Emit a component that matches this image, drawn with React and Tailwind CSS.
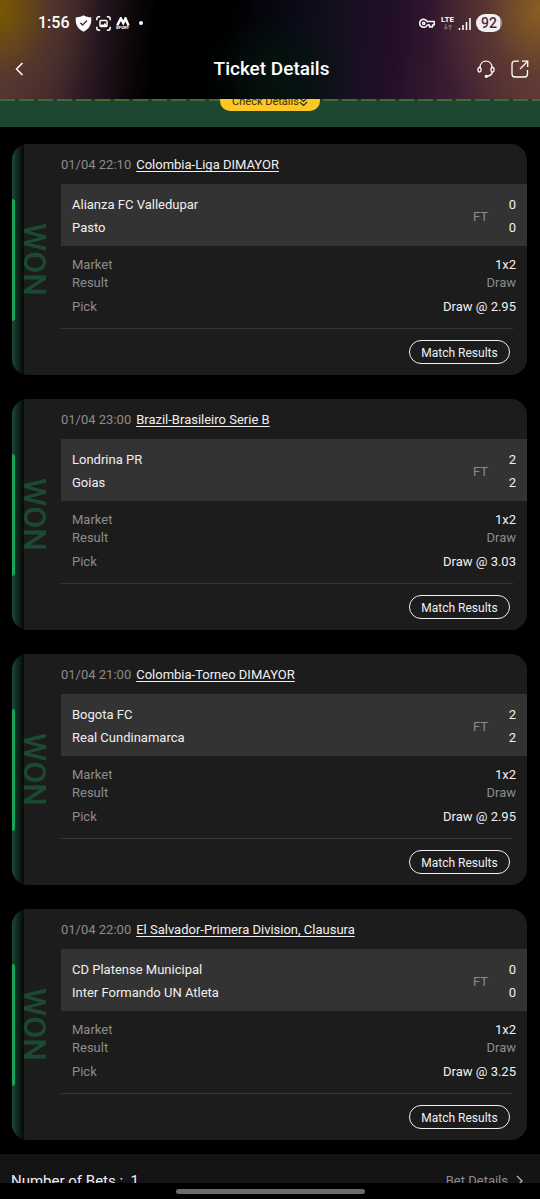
import React from 'react';

const bets = [
  { id: 1, time: '01/04 22:10', league: 'Colombia-Liga DIMAYOR', home: 'Alianza FC Valledupar', away: 'Pasto', homeScore: 0, awayScore: 0, odds: '2.95' },
  { id: 2, time: '01/04 23:00', league: 'Brazil-Brasileiro Serie B', home: 'Londrina PR', away: 'Goias', homeScore: 2, awayScore: 2, odds: '3.03' },
  { id: 3, time: '01/04 21:00', league: 'Colombia-Torneo DIMAYOR', home: 'Bogota FC', away: 'Real Cundinamarca', homeScore: 2, awayScore: 2, odds: '2.95' },
  { id: 4, time: '01/04 22:00', league: 'El Salvador-Primera Division, Clausura', home: 'CD Platense Municipal', away: 'Inter Formando UN Atleta', homeScore: 0, awayScore: 0, odds: '3.25' },
];

function StatusBar() {
  return (
    <div className="flex h-[46px] items-center justify-between pl-[38px] pr-[38px]">
      <div className="flex items-center">
        <span className="w-[37px] text-[16px] font-medium leading-5">1:56</span>
        <svg width="17" height="17" viewBox="0 0 16 16" aria-hidden="true">
          <path d="M8 .2C6 1.500 3.500 2.100 .8 2.200 .2 7 1.200 12.500 8 15.800 14.800 12.500 15.800 7 15.200 2.200 12.500 2.100 10 1.500 8 .2z" fill="#fff" />
          <path d="M5 7.200 7.200 9.400 11.200 5.200" fill="none" stroke="#4a3030" strokeWidth="1.300" />
        </svg>
        <svg className="ml-1" width="15" height="15" viewBox="0 0 15 15" fill="none" stroke="#fff" strokeWidth="1.500" aria-hidden="true">
          <path d="M.8 4.200V3A2.200 2.200 0 0 1 3 .8h1.200M10.800.8H12A2.200 2.200 0 0 1 14.200 3v1.200M14.200 10.800V12a2.200 2.200 0 0 1-2.200 2.200h-1.200M4.200 14.200H3A2.200 2.200 0 0 1 .8 12v-1.200" />
          <rect x="4" y="4.500" width="7" height="6" rx="1" />
          <path d="m4 10.500 2-2.500 1.200 1L9 6.800l2 3.700z" fill="#fff" stroke="none" />
        </svg>
        <span className="ml-1 flex w-[15px] flex-col items-center">
          <svg width="14" height="9" viewBox="0 0 14 9" aria-hidden="true">
            <path d="M1.200 8.500 4.800 1.500 7.300 6 9.500 1.500 12.500 8.500" fill="none" stroke="#fff" strokeWidth="2.500" />
          </svg>
          <span className="text-[4px] font-black leading-[4px]">SPORT</span>
        </span>
        <span className="ml-[9px] h-1 w-1 rounded-full bg-white" />
      </div>
      <div className="flex items-center">
        <svg width="16" height="11" viewBox="0 0 16 11" fill="none" stroke="#fff" strokeWidth="1.500" strokeLinejoin="round" aria-hidden="true">
          <path d="M8.300 3.600A4 4 0 1 0 8.300 7h2.200v2h3V7h1.700V3.600z" />
          <circle cx="4.700" cy="5.300" r="1.100" />
        </svg>
        <span className="ml-[6px] flex w-[13px] flex-col items-center">
          <span className="text-[8px] font-bold leading-2">LTE</span>
          <svg width="10" height="6" viewBox="0 0 10 6" fill="none" stroke="#8a7a84" aria-hidden="true">
            <path d="M2.800 0v5.200M.8 3.200l2 2 2-2M7.200 6V.8M5.200 2.800l2-2 2 2" />
          </svg>
        </span>
        <svg className="ml-1" width="13" height="13" viewBox="0 0 13 13" stroke="#fff" strokeWidth="1.500" aria-hidden="true">
          <path d="M1.500 13v-2M5 13V8M8.500 13V5M12 13V1" />
        </svg>
        <span className="ml-[5px] flex h-[18px] w-[26px] items-center justify-center rounded-full bg-[linear-gradient(90deg,#f5eff2_0_92%,#b09aa0_92%_100%)] text-[14px] font-medium text-[#4b2c3c]">92</span>
      </div>
    </div>
  );
}

function Header() {
  return (
    <header className="h-[99px] bg-black bg-[radial-gradient(ellipse_100px_130px_at_0%_10%,#7a5800_0%,#63442480_50%,transparent_100%),radial-gradient(ellipse_110px_130px_at_100%_10%,#8a5e22_0%,#6b443080_50%,transparent_100%),radial-gradient(ellipse_80px_60px_at_52%_75%,#04140c_0%,transparent_100%),linear-gradient(95deg,#50303a_0%,#3c242e_12%,#24151d_19%,#0b0609_25%,#000_29%,#000_42%,#0a0a18_54%,#14101f_62%,#220e28_72%,#3f2034_86%,#5a3436_100%)]">
      <StatusBar />
      <div className="grid h-[46px] grid-cols-[1fr_auto_1fr] items-center pl-[14px] pr-[11px]">
        <button type="button" aria-label="Back" className="w-3">
          <svg width="12" height="14" viewBox="0 0 12 14" fill="none" stroke="#fff" strokeWidth="1.500" aria-hidden="true">
            <path d="M8.500 1 2.500 7l6 6" />
          </svg>
        </button>
        <h1 className="text-[19px] font-medium leading-6">Ticket Details</h1>
        <div className="flex justify-end gap-4">
          <button type="button" aria-label="Support">
            <svg width="18" height="18" viewBox="0 0 18 18" fill="none" stroke="#fff" strokeWidth="1.300" aria-hidden="true">
              <path d="M3 7.500C3 3.500 5.700 1.200 9 1.200s6 2.300 6 6.300M15.300 12c-.5 2.500-2.500 4-5 4.200" />
              <rect x="1" y="7.500" width="3" height="4.500" rx="1.500" />
              <rect x="14" y="7.500" width="3" height="4.500" rx="1.500" />
              <circle cx="9.300" cy="16.300" r="1" fill="#fff" />
            </svg>
          </button>
          <button type="button" aria-label="Share">
            <svg width="18" height="18" viewBox="0 0 18 18" fill="none" stroke="#fff" strokeWidth="1.300" aria-hidden="true">
              <path d="M8 1.200H4A3 3 0 0 0 1 4.200V14a3 3 0 0 0 3 3h9.500a3 3 0 0 0 3-3v-4M11 1.200h5.700V7M16.500 1.500 9 9" />
            </svg>
          </button>
        </div>
      </div>
    </header>
  );
}

// Tail of the ticket summary, scrolled under the header
function SummaryEdge() {
  return (
    <div className="relative flex h-7 items-start justify-center overflow-hidden bg-[#1d4731]">
      <div className="absolute inset-x-0 top-0 h-[2px] bg-[repeating-linear-gradient(90deg,#3f6b35_0px,#3f6b35_15px,#1d3f2c_15px,#1d3f2c_19px)]" />
      <button type="button" className="relative -mt-2 flex h-5 w-[100px] items-center justify-center rounded-full bg-[#fdc724] pt-[2px] text-[11px] leading-5 text-[#3a2b10]">
        Check Details
        <svg width="9" height="10" viewBox="0 0 9 10" fill="none" stroke="currentColor" strokeWidth="1.200" aria-hidden="true">
          <path d="m.8 1 3.700 3.500L8.200 1M.8 5l3.700 3.500L8.200 5" />
        </svg>
      </button>
    </div>
  );
}

function BetCard({ bet }) {
  return (
    <article className="flex overflow-hidden rounded-2xl bg-[#1c1c1c] text-[13px] text-[#f0f0f0]">
      <div className="flex w-3 items-center bg-linear-to-r from-[#1d4a33] to-[#050807]">
        <div className="h-[122px] w-[3px] rounded-r-full bg-[#17a55a]" />
      </div>
      <div className="flex w-[37px] items-center">
        <span className="text-[32px] font-medium leading-[22px] text-[#1b4a33] [writing-mode:vertical-rl]">WON</span>
      </div>
      <div className="min-w-0 flex-1">
        <div className="flex h-10 items-center gap-[5px] pt-[2px]">
          <span className="text-[#8c8c8c]">{bet.time}</span>
          <a href="#league" className="underline underline-offset-2">{bet.league}</a>
        </div>
        <div className="flex items-center bg-[#333333] px-[11px] pt-[9px] pb-[7px] leading-[23px]">
          <div className="flex-1">
            <p>{bet.home}</p>
            <p>{bet.away}</p>
          </div>
          <span className="text-[#8c8c8c]">FT</span>
          <div className="w-7 text-right">
            <p>{bet.homeScore}</p>
            <p>{bet.awayScore}</p>
          </div>
        </div>
        <dl className="grid grid-cols-[1fr_auto] px-[11px] pt-[10px] pb-3 leading-[18px]">
          <dt className="text-[#8c8c8c]">Market</dt>
          <dd className="text-right">1x2</dd>
          <dt className="text-[#8c8c8c]">Result</dt>
          <dd className="text-right text-[#8c8c8c]">Draw</dd>
          <dt className="mt-[6px] text-[#8c8c8c]">Pick</dt>
          <dd className="mt-[6px] text-right">Draw @ {bet.odds}</dd>
        </dl>
        <div className="mr-[14px] flex justify-end border-t border-[#363636] py-[11px] pr-[3px]">
          <button type="button" className="h-6 w-[101px] rounded-full border border-[#f0f0f0] pt-px text-[12px] leading-5">
            Match Results
          </button>
        </div>
      </div>
    </article>
  );
}

function App() {
  return (
    <div className="flex min-h-screen flex-col bg-black font-['Roboto',sans-serif] text-white">
      <Header />
      <SummaryEdge />
      <main className="flex flex-1 flex-col gap-6 pt-[17px] pb-[14px] pl-3 pr-[13px]">
        {bets.map((bet) => (
          <BetCard key={bet.id} bet={bet} />
        ))}
      </main>
      <footer>
        <div className="flex h-[29px] items-start justify-between overflow-hidden bg-[#141414] pl-[11px] pr-[17px] pt-[17px]">
          <p className="text-[15px] leading-5 text-[#f0f0f0]">Number of Bets :&nbsp; 1</p>
          <a href="#bets" className="flex items-center gap-2 text-[13px] leading-5 text-[#8c8c8c]">
            Bet Details
            <svg width="7" height="12" viewBox="0 0 7 12" fill="none" stroke="#bdbdbd" strokeWidth="1.300" aria-hidden="true">
              <path d="m1 1 5 5-5 5" />
            </svg>
          </a>
        </div>
        <div className="flex h-4 items-center justify-center">
          <div className="h-[5px] w-[35%] rounded-full bg-[#6b6b6b]" />
        </div>
      </footer>
    </div>
  );
}

export default App;
